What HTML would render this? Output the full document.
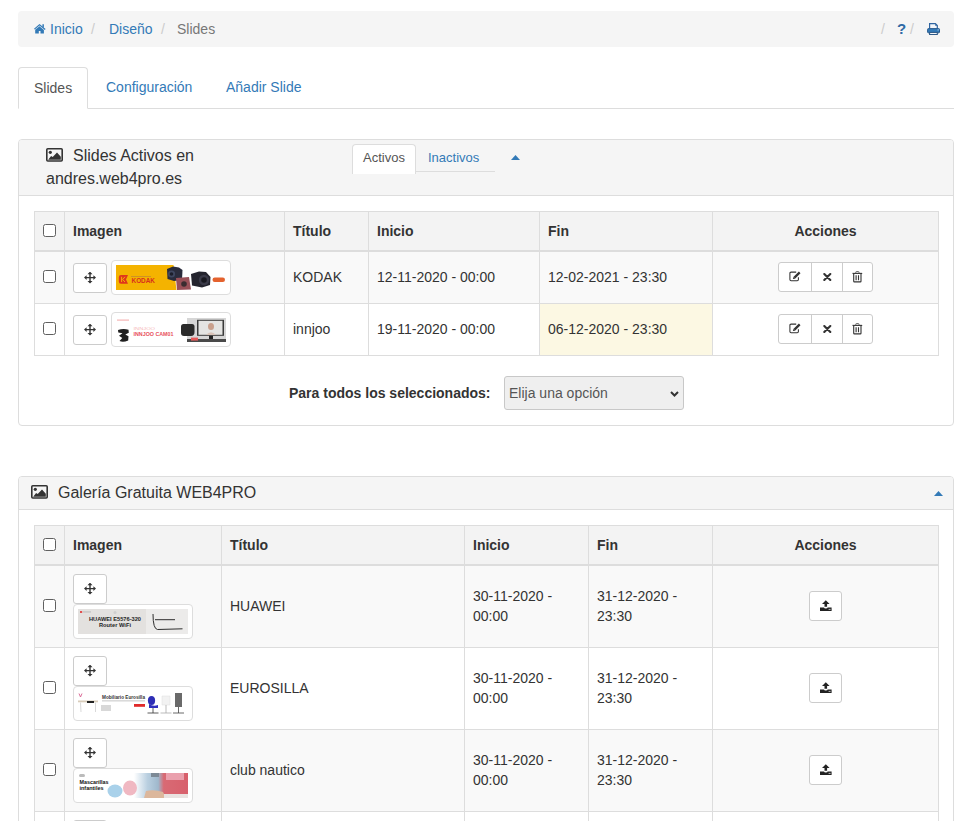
<!DOCTYPE html>
<html><head><meta charset="utf-8">
<style>
*{box-sizing:border-box;}
html,body{margin:0;padding:0;background:#fff;}
body{font-family:"Liberation Sans",sans-serif;font-size:14px;line-height:20px;color:#333;width:974px;height:821px;overflow:hidden;position:relative;}
a{color:#337ab7;text-decoration:none;}
.abs{position:absolute;white-space:nowrap;}
.bc{position:absolute;left:18px;top:11px;width:936px;height:36px;background:#f5f5f5;border-radius:4px;}
.bc span{position:absolute;top:8px;line-height:20px;white-space:nowrap;}
.sl{color:#ccc;}
.tabs{position:absolute;left:18px;top:67px;width:936px;height:42px;border-bottom:1px solid #ddd;}
.tab{position:absolute;top:0;height:42px;padding:10px 15px;line-height:20px;white-space:nowrap;}
.tab.act{background:#fff;border:1px solid #ddd;border-bottom-color:#fff;border-radius:4px 4px 0 0;color:#555;}
.panel{position:absolute;left:18px;width:936px;border:1px solid #ddd;border-radius:4px;background:#fff;}
.ph{position:relative;background:#f5f5f5;border-bottom:1px solid #ddd;border-radius:3px 3px 0 0;}
.ptitle{font-size:16px;color:#333;}
table{border-collapse:collapse;table-layout:fixed;position:absolute;left:15px;}
td,th{border:1px solid #ddd;padding:0 8px;vertical-align:middle;text-align:left;}
.t1 tbody td{vertical-align:top;padding-top:15px;}
.t2 tbody td{vertical-align:top;padding-top:30px;}
.t2 tbody td.two{padding-top:20px;}
th{background:#f3f3f3;font-weight:bold;}
thead th{border-bottom:2px solid #ddd;}
tr.st td{background:#f9f9f9;}
td.warn{background:#fcf8e3;}
.ov{position:absolute;}
.cb{position:absolute;width:13px;height:13px;border:1px solid #606060;border-radius:2.5px;background:#fff;}
.btn{position:absolute;background:#fff;border:1px solid #ccc;border-radius:3px;}
.thumb{position:absolute;background:#fff;border:1px solid #ddd;border-radius:4px;padding:4px;width:120px;height:35px;}
.thumb svg{display:block;}
svg{display:block;}
</style></head><body>

<div class="bc">
  <svg class="abs" style="left:16px;top:13px" width="12" height="10" viewBox="0 0 12 10"><path d="M0 4.7 L5.5 0 L11.6 5 L10.8 5.9 L5.5 1.6 L0.8 5.6 Z M8.4 0.2 H9.9 V3.5 L8.4 2.3 Z M1.2 5.7 L5.5 2.3 L9.9 5.9 V9.6 H6.5 V7 H4.8 V9.6 H1.2 Z" fill="#337ab7"/></svg>
  <span style="left:32px"><a>Inicio</a></span>
  <span class="sl" style="left:73px">/</span>
  <span style="left:91px"><a>Diseño</a></span>
  <span class="sl" style="left:143px">/</span>
  <span style="left:159px;color:#777">Slides</span>
  <span class="sl" style="left:863px">/</span>
  <span style="left:879px;color:#2e6aa5;font-weight:bold;font-size:15px">?</span>
  <span class="sl" style="left:892px">/</span>
  <svg class="abs" style="left:909px;top:12px" width="14" height="12" viewBox="0 0 14 12"><path d="M2.6 5.6 V0.7 H8.4 L10.3 2.6 V5.6" fill="#f3f6fa" stroke="#2f64a0" stroke-width="1.2"/><path d="M8.2 0.7 V2.8 H10.3 Z" fill="#2f64a0"/><rect x="0.6" y="5.6" width="11.9" height="4.2" rx="0.8" fill="#337ab7" stroke="#2a5c90" stroke-width="1"/><rect x="2.6" y="9.4" width="7.7" height="2.1" fill="#fff" stroke="#2f5a88" stroke-width="1.1"/><circle cx="11.1" cy="6.9" r="0.55" fill="#d5e6f5"/></svg>
</div>

<div class="tabs">
  <div class="tab act" style="left:0;width:70px">Slides</div>
  <div class="tab" style="left:73px"><a>Configuración</a></div>
  <div class="tab" style="left:193px"><a>Añadir Slide</a></div>
</div>

<!-- panel 1 -->
<div class="panel" style="top:139px;height:287px">
  <div class="ph" style="height:56px">
    <svg class="abs" style="left:27px;top:8px" width="17" height="14" viewBox="0 0 17 14"><rect x="0.8" y="0.8" width="15.4" height="12.2" rx="1" fill="none" stroke="#333" stroke-width="1.6"/><circle cx="4.3" cy="4.3" r="1.6" fill="#333"/><path d="M2.2 11.8 L5.1 8 L6.7 9 L11 4.4 L14.8 8.8 V11.8 Z" fill="#333"/></svg>
    <div class="abs ptitle" style="left:54px;top:4px;line-height:23px">Slides Activos en</div>
    <div class="abs ptitle" style="left:27px;top:27px;line-height:23px">andres.web4pro.es</div>
    <div class="abs" style="left:333px;top:5px;width:143px;height:27px;border-bottom:1px solid #ddd"></div>
    <div class="abs" style="left:333px;top:4px;width:64px;height:30px;background:#fff;border:1px solid #ddd;border-bottom:none;border-radius:4px 4px 0 0;font-size:13px;line-height:18px;padding:4px 0 0 10px;color:#555">Activos</div>
    <div class="abs" style="left:409px;top:9px;font-size:13px;line-height:18px;color:#337ab7">Inactivos</div>
    <svg class="abs" style="left:492px;top:15px" width="9" height="5" viewBox="0 0 9 5"><path d="M0 5 L4.5 0 L9 5 Z" fill="#337ab7"/></svg>
  </div>
  <table class="t1" style="top:71px;width:904px">
    <colgroup><col style="width:30px"><col style="width:220px"><col style="width:84px"><col style="width:171px"><col style="width:173px"><col style="width:226px"></colgroup>
    <thead><tr style="height:39px"><th></th><th>Imagen</th><th>Título</th><th>Inicio</th><th>Fin</th><th style="text-align:center">Acciones</th></tr></thead>
    <tbody>
    <tr class="st" style="height:53px"><td></td><td></td><td>KODAK</td><td>12-11-2020 - 00:00</td><td>12-02-2021 - 23:30</td><td></td></tr>
    <tr style="height:52px"><td></td><td></td><td>innjoo</td><td>19-11-2020 - 00:00</td><td class="warn">06-12-2020 - 23:30</td><td></td></tr>
    </tbody>
  </table>
  <div class="abs" style="left:270px;top:243px;font-weight:bold">Para todos los seleccionados:</div>
  <div class="abs" style="left:485px;top:236px;width:180px;height:34px;background:#efefef;border:1px solid #c8c8c8;border-radius:3px">
    <span class="abs" style="left:4px;top:6px;color:#555">Elija una opción</span>
    <svg class="abs" style="left:165px;top:14px" width="9" height="6" viewBox="0 0 9 6"><path d="M1 1 L4.5 4.5 L8 1" fill="none" stroke="#333" stroke-width="2"/></svg>
  </div>
</div>

<!-- panel 2 -->
<div class="panel" style="top:476px;height:400px">
  <div class="ph" style="height:33px">
    <svg class="abs" style="left:12px;top:8px" width="17" height="14" viewBox="0 0 17 14"><rect x="0.8" y="0.8" width="15.4" height="12.2" rx="1" fill="none" stroke="#333" stroke-width="1.6"/><circle cx="4.3" cy="4.3" r="1.6" fill="#333"/><path d="M2.2 11.8 L5.1 8 L6.7 9 L11 4.4 L14.8 8.8 V11.8 Z" fill="#333"/></svg>
    <div class="abs ptitle" style="left:39px;top:4px;line-height:23px">Galería Gratuita WEB4PRO</div>
    <svg class="abs" style="left:915px;top:14px" width="9" height="5" viewBox="0 0 9 5"><path d="M0 5 L4.5 0 L9 5 Z" fill="#337ab7"/></svg>
  </div>
  <table class="t2" style="top:48px;width:904px">
    <colgroup><col style="width:30px"><col style="width:157px"><col style="width:243px"><col style="width:124px"><col style="width:124px"><col style="width:226px"></colgroup>
    <thead><tr style="height:39px"><th></th><th>Imagen</th><th>Título</th><th>Inicio</th><th>Fin</th><th style="text-align:center">Acciones</th></tr></thead>
    <tbody>
    <tr class="st" style="height:83px"><td></td><td></td><td>HUAWEI</td><td class="two">30-11-2020 - 00:00</td><td class="two">31-12-2020 - 23:30</td><td></td></tr>
    <tr style="height:82px"><td></td><td></td><td>EUROSILLA</td><td class="two">30-11-2020 - 00:00</td><td class="two">31-12-2020 - 23:30</td><td></td></tr>
    <tr class="st" style="height:82px"><td></td><td></td><td>club nautico</td><td class="two">30-11-2020 - 00:00</td><td class="two">31-12-2020 - 23:30</td><td></td></tr>
    <tr style="height:82px"><td></td><td></td><td></td><td></td><td></td><td></td></tr>
    </tbody>
  </table>
</div>

<!-- overlays -->
<div id="ovl">
<div class="cb" style="left:43px;top:224px"></div>
<div class="cb" style="left:43px;top:270px"></div>
<div class="cb" style="left:43px;top:322px"></div>
<div class="btn" style="left:73px;top:263px;width:34px;height:30px"><svg class="abs" style="left:10px;top:8px" width="13" height="12" viewBox="0.5 0.4 13 12"><path d="M6.5 0 L9 2.6 H7.2 V5.3 H9.9 V3.6 L12.5 6 L9.9 8.4 V6.7 H7.2 V9.4 H9 L6.5 12 L4 9.4 H5.8 V6.7 H3.1 V8.4 L0.5 6 L3.1 3.6 V5.3 H5.8 V2.6 H4 Z" fill="#333"/></svg></div>
<div class="btn" style="left:73px;top:315px;width:34px;height:30px"><svg class="abs" style="left:10px;top:8px" width="13" height="12" viewBox="0.5 0.4 13 12"><path d="M6.5 0 L9 2.6 H7.2 V5.3 H9.9 V3.6 L12.5 6 L9.9 8.4 V6.7 H7.2 V9.4 H9 L6.5 12 L4 9.4 H5.8 V6.7 H3.1 V8.4 L0.5 6 L3.1 3.6 V5.3 H5.8 V2.6 H4 Z" fill="#333"/></svg></div>
<div class="thumb" style="left:111px;top:260px"><svg width="110" height="25" viewBox="0 0 110 25"><rect width="110" height="25" fill="#fff"/>
<path d="M0 0 H57.5 L60.5 25 H0 Z" fill="#f4b300"/>
<path d="M5 10 H12 L10 14.4 L12 18.8 H5 Q2.8 18.8 2.8 16.5 V12.3 Q2.8 10 5 10 Z" fill="#e0361c"/>
<path d="M5.6 11.8 V17 M9 11.8 L6.6 14.4 L9 17" stroke="#f4b300" stroke-width="1" fill="none"/>
<rect x="15" y="11" width="20" height="0.9" fill="#c9902a"/>
<text x="15.5" y="18.3" font-family="Liberation Sans" font-weight="bold" font-size="6.8" fill="#d8301c" textLength="23.5" lengthAdjust="spacingAndGlyphs">KODAK</text>
<path d="M51 4 L57 1.5 L63 2.5 L66.5 5 L66 15 L58 16 L51.5 14 Z" fill="#2a2c3c"/>
<circle cx="55.5" cy="9" r="3.6" fill="#3f4760"/>
<circle cx="55.5" cy="9" r="1.8" fill="#1c1e2a"/>
<path d="M60 13 L73 12 L75 24.5 L61 25 Z" fill="#9a5058"/>
<circle cx="68" cy="19" r="2.8" fill="#3b2c30"/>
<path d="M75 9 L83 6.5 L90 7 L94.5 12 L94 20 L86 22.5 L76 20.5 Z" fill="#24242e"/>
<circle cx="88" cy="15" r="5.2" fill="#3a3a48"/>
<circle cx="88" cy="15" r="2.8" fill="#18181f"/>
<rect x="96.5" y="12.5" width="12.5" height="4.5" rx="2.2" fill="#e4622e"/></svg></div>
<div class="thumb" style="left:111px;top:312px"><svg width="110" height="25" viewBox="0 0 110 25"><rect width="110" height="25" fill="#fff"/>
<rect x="1" y="2.5" width="12" height="1.2" fill="#f5b5b5"/>
<path d="M2 13 Q7.5 11 12.5 12.8 L12.8 15.8 L9.3 17.5 L12.5 19.2 L12.2 23.5 Q7 25.8 3.5 24 L6.3 21 L3 18.8 L6.5 16.2 L2.3 15.5 Z" fill="#1f1f1f"/>
<text x="17.5" y="12.8" font-family="Liberation Sans" font-size="4" fill="#f6b9b9" textLength="21.5" lengthAdjust="spacingAndGlyphs">INNJOO</text>
<text x="17.5" y="19" font-family="Liberation Sans" font-weight="bold" font-size="5.8" fill="#e8505c" textLength="40" lengthAdjust="spacingAndGlyphs">INNJOO CAM01</text>
<rect x="71" y="1" width="39" height="24" fill="#d6d6d6"/>
<rect x="81" y="2.8" width="27" height="16" fill="#3a3a3a"/>
<rect x="82.5" y="3.8" width="24" height="14" fill="#e4e4e2"/>
<ellipse cx="95" cy="9.5" rx="3" ry="3.5" fill="#c9a08c"/>
<path d="M90 18 Q95 12.5 100 18 Z" fill="#d9c3b8"/>
<rect x="93" y="18.8" width="4" height="4" fill="#222"/>
<rect x="71" y="22" width="39" height="3" fill="#4a4a4a"/>
<rect x="75" y="20.6" width="7" height="3" fill="#e55a5a"/>
<path d="M65 9.5 Q65 7 67.5 7 H76 Q78.5 7 78.5 9.5 V15 Q78.5 19 75 19 H68 Q65 19 65 16 Z" fill="#2a2a2a"/></svg></div>
<div class="btn" style="left:778px;top:262px;width:95px;height:30px;"><div class="abs" style="left:32px;top:0;width:1px;height:28px;background:#ccc"></div><div class="abs" style="left:63px;top:0;width:1px;height:28px;background:#ccc"></div><svg class="abs" style="left:10px;top:8px" width="13" height="11" viewBox="0 0 13 11"><path d="M7.2 1.1 H2.1 Q0.9 1.1 0.9 2.3 V8.5 Q0.9 9.7 2.1 9.7 H8.2 Q9.4 9.7 9.4 8.5 V6.2" fill="none" stroke="#333" stroke-width="1.05"/><path d="M3.9 8.1 L4.4 6.1 L9.9 0.6 L11.5 2.2 L6 7.7 Z" fill="#333"/><path d="M4.9 6.4 L5.7 7.2" stroke="#fff" stroke-width="0.5"/></svg><svg class="abs" style="left:44px;top:10px" width="9" height="8" viewBox="0 0 9 8"><path d="M1.3 1.1 L7.3 7.1 M7.3 1.1 L1.3 7.1" stroke="#333" stroke-width="2.1" stroke-linecap="round"/></svg><svg class="abs" style="left:73px;top:8px" width="11" height="12" viewBox="0 0 11 12"><path d="M0.5 2.4 H10.2" stroke="#333" stroke-width="1.1"/><path d="M3.8 2.2 V1.2 Q3.8 0.6 4.4 0.6 H6.4 Q7 0.6 7 1.2 V2.2" fill="none" stroke="#555" stroke-width="0.9"/><path d="M1.7 2.6 V10.2 Q1.7 10.9 2.4 10.9 H8.3 Q9 10.9 9 10.2 V2.6" fill="none" stroke="#333" stroke-width="1.1"/><path d="M4.1 4.2 V9.2 M6.5 4.2 V9.2" stroke="#333" stroke-width="1.1"/></svg></div>
<div class="btn" style="left:778px;top:314px;width:95px;height:30px;"><div class="abs" style="left:32px;top:0;width:1px;height:28px;background:#ccc"></div><div class="abs" style="left:63px;top:0;width:1px;height:28px;background:#ccc"></div><svg class="abs" style="left:10px;top:8px" width="13" height="11" viewBox="0 0 13 11"><path d="M7.2 1.1 H2.1 Q0.9 1.1 0.9 2.3 V8.5 Q0.9 9.7 2.1 9.7 H8.2 Q9.4 9.7 9.4 8.5 V6.2" fill="none" stroke="#333" stroke-width="1.05"/><path d="M3.9 8.1 L4.4 6.1 L9.9 0.6 L11.5 2.2 L6 7.7 Z" fill="#333"/><path d="M4.9 6.4 L5.7 7.2" stroke="#fff" stroke-width="0.5"/></svg><svg class="abs" style="left:44px;top:10px" width="9" height="8" viewBox="0 0 9 8"><path d="M1.3 1.1 L7.3 7.1 M7.3 1.1 L1.3 7.1" stroke="#333" stroke-width="2.1" stroke-linecap="round"/></svg><svg class="abs" style="left:73px;top:8px" width="11" height="12" viewBox="0 0 11 12"><path d="M0.5 2.4 H10.2" stroke="#333" stroke-width="1.1"/><path d="M3.8 2.2 V1.2 Q3.8 0.6 4.4 0.6 H6.4 Q7 0.6 7 1.2 V2.2" fill="none" stroke="#555" stroke-width="0.9"/><path d="M1.7 2.6 V10.2 Q1.7 10.9 2.4 10.9 H8.3 Q9 10.9 9 10.2 V2.6" fill="none" stroke="#333" stroke-width="1.1"/><path d="M4.1 4.2 V9.2 M6.5 4.2 V9.2" stroke="#333" stroke-width="1.1"/></svg></div>
<div class="cb" style="left:43px;top:538px"></div>
<div class="cb" style="left:43px;top:599px"></div>
<div class="btn" style="left:73px;top:574px;width:34px;height:30px"><svg class="abs" style="left:10px;top:8px" width="13" height="12" viewBox="0.5 0.4 13 12"><path d="M6.5 0 L9 2.6 H7.2 V5.3 H9.9 V3.6 L12.5 6 L9.9 8.4 V6.7 H7.2 V9.4 H9 L6.5 12 L4 9.4 H5.8 V6.7 H3.1 V8.4 L0.5 6 L3.1 3.6 V5.3 H5.8 V2.6 H4 Z" fill="#333"/></svg></div>
<div class="thumb" style="left:73px;top:604px"><svg width="110" height="25" viewBox="0 0 110 25"><rect width="110" height="25" fill="#e3e1df"/>
<rect x="68" y="0" width="42" height="25" fill="#ecebea"/>
<rect x="2" y="2" width="2.2" height="2" fill="#e05050"/>
<rect x="5" y="2.4" width="8" height="1.1" fill="#bdbdbd"/>
<circle cx="37" cy="3.5" r="1.5" fill="#cfcfcf"/>
<text x="37" y="12" font-family="Liberation Sans" font-weight="bold" font-size="5.6" fill="#1e1e1e" text-anchor="middle" textLength="52" lengthAdjust="spacingAndGlyphs">HUAWEI E5576-320</text>
<text x="37" y="18" font-family="Liberation Sans" font-weight="bold" font-size="5.6" fill="#1e1e1e" text-anchor="middle" textLength="32" lengthAdjust="spacingAndGlyphs">Router WiFi</text>
<path d="M75 5 Q75 20 79.5 20.5 L104.5 19.8" fill="none" stroke="#2e2e2e" stroke-width="1"/>
<path d="M77 10.7 H97" stroke="#2e2e2e" stroke-width="1"/></svg></div>
<div class="btn" style="left:809px;top:591px;width:33px;height:30px"><svg class="abs" style="left:10px;top:8px" width="12" height="12" viewBox="0 0 12 12"><path d="M5.8 0.2 L9.6 3.9 H7.1 V6.7 H4.5 V3.9 H2 Z" fill="#222"/><path d="M0 7.6 H4 Q4 8.6 5.8 8.6 Q7.6 8.6 7.6 7.6 H11.6 V11 H0 Z" fill="#222"/><path d="M8.6 9.4 H10.6" stroke="#fff" stroke-width="0.7"/></svg></div>
<div class="cb" style="left:43px;top:681px"></div>
<div class="btn" style="left:73px;top:656px;width:34px;height:30px"><svg class="abs" style="left:10px;top:8px" width="13" height="12" viewBox="0.5 0.4 13 12"><path d="M6.5 0 L9 2.6 H7.2 V5.3 H9.9 V3.6 L12.5 6 L9.9 8.4 V6.7 H7.2 V9.4 H9 L6.5 12 L4 9.4 H5.8 V6.7 H3.1 V8.4 L0.5 6 L3.1 3.6 V5.3 H5.8 V2.6 H4 Z" fill="#333"/></svg></div>
<div class="thumb" style="left:73px;top:686px"><svg width="110" height="25" viewBox="0 0 110 25"><rect width="110" height="25" fill="#fff"/>
<path d="M1 2.5 L2.5 6 L4 2.5" stroke="#d86090" stroke-width="0.9" fill="none"/>
<rect x="0" y="9.5" width="20" height="1.8" fill="#d9cdbb"/>
<rect x="9" y="10" width="7" height="2" fill="#222"/>
<path d="M2.5 11.5 L3 21 M17.5 11.5 L17.5 21" stroke="#d5d5d5" stroke-width="0.9"/>
<rect x="23" y="14" width="10" height="6" fill="#d8d8d8"/>
<text x="24" y="8" font-family="Liberation Sans" font-weight="bold" font-size="5.2" fill="#333" textLength="43" lengthAdjust="spacingAndGlyphs">Mobiliario Eurosilla</text>
<rect x="24" y="9.5" width="43" height="0.8" fill="#b5b5b5"/>
<rect x="56" y="13" width="11" height="2.8" fill="#e02b2b"/>
<ellipse cx="73.5" cy="9.5" rx="3.6" ry="4.5" fill="#2e2eb5"/>
<path d="M71 13 Q75 16 80 14 V17 H71 Z" fill="#2f2fbd"/>
<path d="M75 17 V22 M69.5 22 H80.5" stroke="#333" stroke-width="0.8"/>
<path d="M84 5 H92 V14 H84 Z" fill="#f2f2f2" stroke="#dcdcdc" stroke-width="0.5"/>
<path d="M88 14 V22 M82.5 22 H93.5" stroke="#aaa" stroke-width="0.8"/>
<path d="M97 2 H104 V16 H97 Z" fill="#6a6a6a"/>
<path d="M100.5 16 V22 M95 22 H106" stroke="#444" stroke-width="0.8"/></svg></div>
<div class="btn" style="left:809px;top:673px;width:33px;height:30px"><svg class="abs" style="left:10px;top:8px" width="12" height="12" viewBox="0 0 12 12"><path d="M5.8 0.2 L9.6 3.9 H7.1 V6.7 H4.5 V3.9 H2 Z" fill="#222"/><path d="M0 7.6 H4 Q4 8.6 5.8 8.6 Q7.6 8.6 7.6 7.6 H11.6 V11 H0 Z" fill="#222"/><path d="M8.6 9.4 H10.6" stroke="#fff" stroke-width="0.7"/></svg></div>
<div class="cb" style="left:43px;top:763px"></div>
<div class="btn" style="left:73px;top:738px;width:34px;height:30px"><svg class="abs" style="left:10px;top:8px" width="13" height="12" viewBox="0.5 0.4 13 12"><path d="M6.5 0 L9 2.6 H7.2 V5.3 H9.9 V3.6 L12.5 6 L9.9 8.4 V6.7 H7.2 V9.4 H9 L6.5 12 L4 9.4 H5.8 V6.7 H3.1 V8.4 L0.5 6 L3.1 3.6 V5.3 H5.8 V2.6 H4 Z" fill="#333"/></svg></div>
<div class="thumb" style="left:73px;top:768px"><svg width="110" height="25" viewBox="0 0 110 25"><defs><linearGradient id="cg" x1="0" x2="1"><stop offset="0" stop-color="#fff"/><stop offset="0.25" stop-color="#b9cfe0"/><stop offset="0.45" stop-color="#9fb8cc"/><stop offset="0.55" stop-color="#d86a74"/><stop offset="1" stop-color="#d8606c"/></linearGradient></defs>
<rect width="110" height="25" fill="#fff"/>
<rect x="1" y="1" width="6" height="3" rx="1.5" fill="#bbb"/>
<text x="1.5" y="11" font-family="Liberation Sans" font-weight="bold" font-size="5.2" fill="#111" textLength="29" lengthAdjust="spacingAndGlyphs">Mascarillas</text>
<text x="1.5" y="16.5" font-family="Liberation Sans" font-weight="bold" font-size="5.2" fill="#111" textLength="24" lengthAdjust="spacingAndGlyphs">infantiles</text>
<rect x="56" y="0" width="54" height="25" fill="url(#cg)"/>
<rect x="73" y="0" width="8" height="4" fill="#7d8a96"/>
<rect x="88" y="0" width="18" height="7" fill="#eaa0ad"/>
<path d="M66 25 L68 18 Q76 16 85 19 L88 25 Z" fill="#dcb79c"/>
<rect x="86" y="21" width="24" height="4" fill="#e9e2e0"/>
<ellipse cx="37" cy="18" rx="7.5" ry="6.5" fill="#a9d1ea"/>
<ellipse cx="52" cy="15" rx="7" ry="7.5" fill="#f0b8c2"/></svg></div>
<div class="btn" style="left:809px;top:755px;width:33px;height:30px"><svg class="abs" style="left:10px;top:8px" width="12" height="12" viewBox="0 0 12 12"><path d="M5.8 0.2 L9.6 3.9 H7.1 V6.7 H4.5 V3.9 H2 Z" fill="#222"/><path d="M0 7.6 H4 Q4 8.6 5.8 8.6 Q7.6 8.6 7.6 7.6 H11.6 V11 H0 Z" fill="#222"/><path d="M8.6 9.4 H10.6" stroke="#fff" stroke-width="0.7"/></svg></div>
<div class="btn" style="left:73px;top:820px;width:34px;height:30px"><svg class="abs" style="left:10px;top:8px" width="13" height="12" viewBox="0.5 0.4 13 12"><path d="M6.5 0 L9 2.6 H7.2 V5.3 H9.9 V3.6 L12.5 6 L9.9 8.4 V6.7 H7.2 V9.4 H9 L6.5 12 L4 9.4 H5.8 V6.7 H3.1 V8.4 L0.5 6 L3.1 3.6 V5.3 H5.8 V2.6 H4 Z" fill="#333"/></svg></div>
</div>
</body></html>
